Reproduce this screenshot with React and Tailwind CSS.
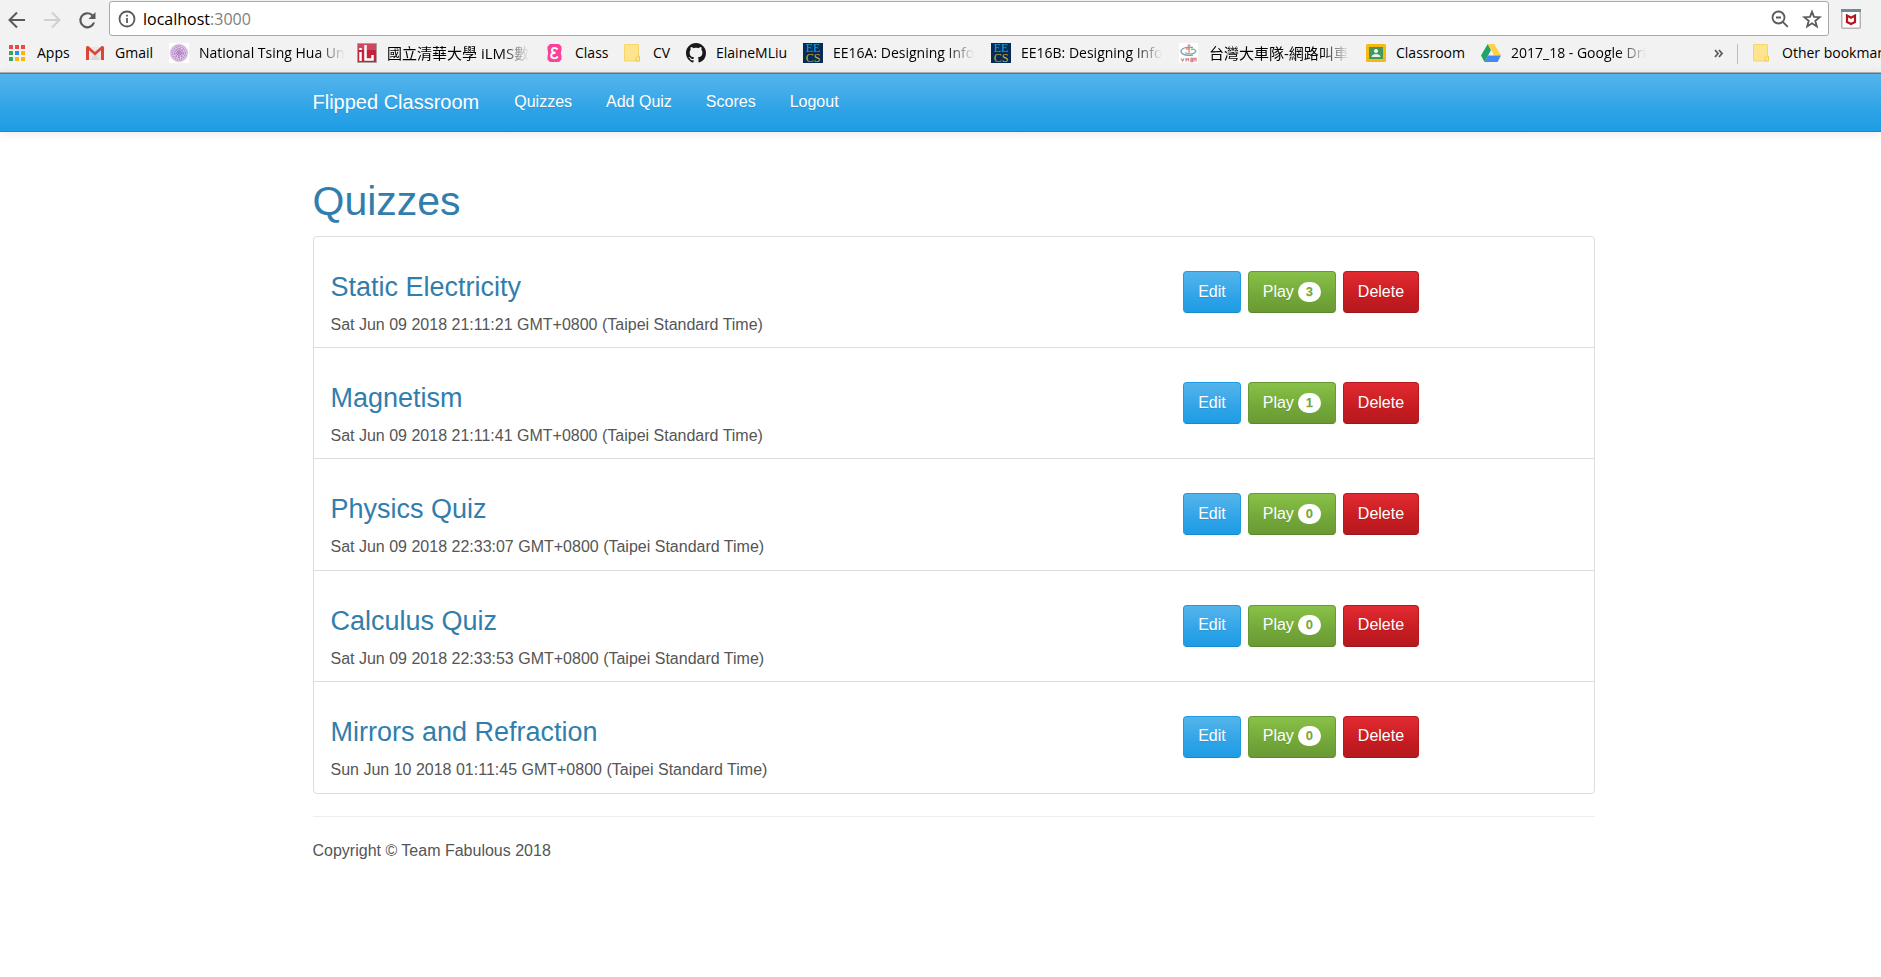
import React from "react";

const glyph = "block h-5 w-5 shrink-0";

function AppsIcon() {
  const colors = ["#f04a3e", "#f04a3e", "#f04a3e", "#3aa757", "#2a8cf0", "#fbb50f", "#3aa757", "#fbb50f", "#fbb50f"];
  return (
    <svg className={glyph} viewBox="0 0 20 20" aria-hidden="true">
      {colors.map((c, i) => (
        <rect key={i} x={2 + (i % 3) * 6} y={2 + Math.floor(i / 3) * 6} width="4" height="4" fill={c} />
      ))}
    </svg>
  );
}

function GmailIcon() {
  return (
    <svg className={glyph} viewBox="0 0 20 20" aria-hidden="true">
      <path d="M2 4h16v13H2z" fill="#e9e6e6" />
      <path d="M5 17l5-6 5 6z" fill="#d8d6d6" />
      <path d="M1 4.500q0-1.500 1.500-1.500h.8L10 9l6.700-6h.8Q19 3 19 4.500V17h-3V7.200L10 12.500 4 7.200V17H1z" fill="#dc4639" />
    </svg>
  );
}

function SealIcon() {
  return (
    <svg className={glyph} viewBox="0 0 20 20" aria-hidden="true">
      <path d="M0 0h20v20H0z" fill="#fff" />
      <circle cx="10" cy="10" r="9.300" fill="#e6d3ec" />
      <g fill="none" stroke="#b07fc4">
        <circle cx="10" cy="10" r="8" strokeWidth="1" opacity=".5" />
        <circle cx="10" cy="10" r="6.300" strokeWidth="1.200" strokeDasharray="1.500 .6" />
        <circle cx="10" cy="10" r="4.300" strokeWidth="1.200" strokeDasharray="2 .8" />
        <circle cx="10" cy="10" r="2.200" strokeWidth="1.200" />
      </g>
      <path d="M10 5v10M5 10h10M6.500 6.500l7 7M13.500 6.500l-7 7" stroke="#a674bd" strokeWidth=".6" />
    </svg>
  );
}

function IlmsIcon() {
  return (
    <svg className={glyph} viewBox="0 0 20 20" aria-hidden="true">
      <path d="M.5.500h19v19H.500z" fill="#c5203c" stroke="#a9a0a0" />
      <path d="M1 1h18v6H1z" fill="#d7607a" opacity=".6" />
      <path d="M3.500 5v2M3.500 9v9M8.500 2v14.500h7V12" fill="none" stroke="#fff" strokeWidth="2.500" />
    </svg>
  );
}

function EIcon() {
  return (
    <svg className={glyph} viewBox="0 0 20 20" aria-hidden="true">
      <path d="M5 1h9l2.500 2.500V7l-.7 3 .7 3v3.500L14 19H5l-2.500-2.500V13l.7-3-.7-3V3.500z" fill="#fb429b" />
      <path d="M12.500 6.500C11 4.300 7 4.700 7 7.300c0 1.700 1.500 2.500 3.500 2.500-2.500 0-4.300 1-4.300 3 0 3 5.200 3.200 6.500.7" fill="none" stroke="#fff" strokeWidth="2" />
    </svg>
  );
}

function FolderIcon() {
  return (
    <svg className={glyph} viewBox="0 0 20 20" aria-hidden="true">
      <path d="M1.500 1.500h14v12h1v4.500h-15z" fill="#fee48e" stroke="#f7d567" />
      <path d="M13 18v-3.500l2-1.500h1.500v5z" fill="#fee48e" stroke="#f2cb55" />
    </svg>
  );
}

function GithubIcon() {
  return (
    <svg className={glyph} viewBox="0 0 16 16" fill="#191717" aria-hidden="true">
      <path d="M8 0C3.580 0 0 3.580 0 8c0 3.540 2.290 6.530 5.470 7.590.4.070.55-.17.55-.38 0-.19-.01-.82-.01-1.490-2.010.37-2.530-.49-2.690-.94-.09-.23-.48-.94-.82-1.130-.28-.15-.68-.52-.01-.53.63-.01 1.080.58 1.230.82.72 1.210 1.870.87 2.330.66.070-.52.28-.87.51-1.070-1.780-.2-3.640-.89-3.640-3.950 0-.87.31-1.590.82-2.150-.08-.2-.36-1.020.08-2.120 0 0 .67-.21 2.200.82.64-.18 1.320-.27 2-.27s1.360.09 2 .27c1.530-1.040 2.200-.82 2.200-.82.44 1.100.16 1.920.08 2.120.51.56.82 1.270.82 2.150 0 3.070-1.870 3.750-3.650 3.950.29.25.54.73.54 1.480 0 1.070-.01 1.930-.01 2.200 0 .21.15.46.55.38A8.010 8.010 0 0 0 16 8c0-4.420-3.580-8-8-8z" />
    </svg>
  );
}

function EecsIcon() {
  return (
    <span className="flex h-5 w-5 shrink-0 flex-col items-center justify-center bg-[#062b55] font-['Liberation_Serif',serif] text-[12px] leading-[10px]" aria-hidden="true">
      <span className="text-[#18a5dc]">EE</span>
      <span className="text-[#d9a52e]">CS</span>
    </span>
  );
}

function TaxiIcon() {
  return (
    <svg className={glyph} viewBox="0 0 20 20" aria-hidden="true">
      <path d="M0 0h19v20H0z" fill="#fff" />
      <g fill="none" strokeWidth="1.300">
        <path d="M14 4.500C7 3.500 2 5.500 2 8.500S8 13 14 12" stroke="#7fa3b5" />
        <path d="M6 9.500c4 2.500 10 1.500 11-1.500-1-1.500-3-2-5-1.500" stroke="#7fbb9b" />
        <path d="M10 5v5.500M7 6h4" stroke="#eb8d72" />
        <path d="M2 15.500l1.500 2.500L5 15.500M7 18.500v-2.500h2.500v2.500M12 15.500h1.500v3H12zM15 18.500v-3h2v3" stroke="#d6848b" />
      </g>
      <circle cx="10" cy="2.500" r="1.300" fill="#eb8d72" />
    </svg>
  );
}

function ClassroomIcon() {
  return (
    <svg className={glyph} viewBox="0 0 20 20" aria-hidden="true">
      <rect y="1" width="20" height="18" rx="1.500" fill="#f5ba16" />
      <path d="M3 4h14v12H3z" fill="#43995a" />
      <circle cx="10" cy="8" r="2" fill="#fff" />
      <path d="M5.500 14c0-4 9-4 9 0z" fill="#e8f3ea" />
    </svg>
  );
}

function DriveIcon() {
  return (
    <svg className={glyph} viewBox="0 0 20 20" aria-hidden="true">
      <path d="M6.700 1L0 12.500 3.500 19l6.500-12z" fill="#1fa463" />
      <path d="M6.700 1h6.600L20 12.500h-6.700z" fill="#ffcf48" />
      <path d="M6.800 12.500H20L16.600 19H3.500z" fill="#4587f4" />
    </svg>
  );
}

function Bookmark({ icon, label, width = "", fade, cjk }) {
  return (
    <a href="#" className={"flex h-9 shrink-0 items-center gap-[10px] pb-[2px] " + width}>
      {icon}
      <span
        className={
          "whitespace-nowrap " +
          (cjk ? "text-[15px] " : "text-[14px] ") +
          (fade ? "[mask-image:linear-gradient(to_right,#000_calc(100%-28px),transparent)]" : "")
        }
      >
        {label}
      </span>
    </a>
  );
}

const bookmarks = [
  { icon: <AppsIcon />, label: "Apps", width: "w-[78px]" },
  { icon: <GmailIcon />, label: "Gmail", width: "w-[84px]" },
  { icon: <SealIcon />, label: "National Tsing Hua Un", width: "w-[188px]", fade: true },
  { icon: <IlmsIcon />, label: "國立清華大學 iLMS數", width: "w-[188px]", fade: true, cjk: true },
  { icon: <EIcon />, label: "Class", width: "w-[78px]" },
  { icon: <FolderIcon />, label: "CV", width: "w-[63px]" },
  { icon: <GithubIcon />, label: "ElaineMLiu", width: "w-[117px]" },
  { icon: <EecsIcon />, label: "EE16A: Designing Info", width: "w-[188px]", fade: true },
  { icon: <EecsIcon />, label: "EE16B: Designing Info", width: "w-[188px]", fade: true },
  { icon: <TaxiIcon />, label: "台灣大車隊-網路叫車", width: "w-[187px]", fade: true, cjk: true },
  { icon: <ClassroomIcon />, label: "Classroom", width: "w-[115px]" },
  { icon: <DriveIcon />, label: "2017_18 - Google Dri", width: "w-[188px]", fade: true },
];

function BrowserBar() {
  return (
    <header className="overflow-hidden border-b border-[#b3b3b3] bg-[#f2f2f2] font-['Open_Sans','Noto_Sans_CJK_TC',sans-serif] text-black">
      <div className="flex h-9 items-end">
        <div className="flex h-8 w-[109px] shrink-0 items-center gap-[15px] pl-[7px] text-[#5a5a5a]">
          <button type="button" aria-label="Back">
            <svg className={glyph} viewBox="0 0 20 20" fill="none" stroke="currentColor" strokeWidth="2">
              <path d="M18 10H3M10 2.500L2.500 10l7.500 7.500" />
            </svg>
          </button>
          <button type="button" aria-label="Forward" className="text-[#d0d0d0]">
            <svg className={glyph} viewBox="0 0 20 20" fill="none" stroke="currentColor" strokeWidth="2">
              <path d="M2 10h15M10 2.500l7.500 7.500-7.500 7.500" />
            </svg>
          </button>
          <button type="button" aria-label="Reload">
            <svg className={glyph} viewBox="0 0 20 20" fill="none" stroke="currentColor" strokeWidth="2.200">
              <path d="M17 12.500A7 7 0 1 1 15 5l1.500 1.500" />
              <path d="M18.500 2v7h-7z" fill="currentColor" stroke="none" />
            </svg>
          </button>
        </div>
        <div className="flex h-[35px] min-w-0 flex-1 items-center rounded-[3px] border border-[#a9a9a9] bg-white pr-[6px] pl-[7px]">
          <svg className={glyph} viewBox="0 0 20 20" fill="none" stroke="#5a5a5a" strokeWidth="1.800" aria-hidden="true">
            <circle cx="10" cy="10" r="7.500" />
            <path d="M10 9v5M10 5.800v1.800" />
          </svg>
          <p className="ml-[6px] flex-1 text-[16px] leading-6">
            localhost<span className="text-[#808080]">:3000</span>
          </p>
          <button type="button" aria-label="Zoom">
            <svg className={glyph} viewBox="0 0 20 20" fill="none" stroke="#5a5a5a" strokeWidth="1.800">
              <circle cx="8.500" cy="8.500" r="6" />
              <path d="M6 8.500h5M12.800 12.800l5 5" />
            </svg>
          </button>
          <button type="button" aria-label="Bookmark this page" className="ml-3">
            <svg className={glyph} viewBox="0 0 20 20" fill="none" stroke="#5a5a5a" strokeWidth="1.800">
              <path d="M10 2.700l2 5.200 5.800.3-4.500 3.600 1.500 5.600-4.800-3.100-4.800 3.100 1.500-5.600L2.200 8.200l5.800-.3z" />
            </svg>
          </button>
        </div>
        <div className="flex h-[35px] w-[52px] shrink-0 items-center pl-3">
          <button type="button" aria-label="Web security">
            <svg className={glyph} viewBox="0 0 20 20">
              <rect x=".75" y=".75" width="18.500" height="18.500" rx="1.500" fill="#fff" stroke="#b5b5b5" strokeWidth="1.500" />
              <path d="M0 0h20v3H0z" fill="#6f8b98" />
              <path d="M6 6.500l4 2.200 4-2.200v6.500l-4 2-4-2z" fill="none" stroke="#b7141e" strokeWidth="2.200" />
            </svg>
          </button>
        </div>
      </div>
      <nav aria-label="Bookmarks" className="flex h-9 items-center pl-[7px] leading-5">
        <div className="flex min-w-0 flex-1 overflow-hidden">
          {bookmarks.map((b) => (
            <Bookmark key={b.label} {...b} />
          ))}
        </div>
        <div className="flex w-[168px] shrink-0 items-center">
          <button type="button" aria-label="More bookmarks" className="w-6 shrink-0">
            <svg className="block h-3 w-3" viewBox="0 0 12 12" fill="none" stroke="#5a5a5a" strokeWidth="1.800">
              <path d="M2 2l3 3.500L2 9M6 2l3 3.500L6 9" />
            </svg>
          </button>
          <span className="mr-[14px] h-5 w-px shrink-0 bg-[#bdbdbd]" />
          <Bookmark icon={<FolderIcon />} label="Other bookmarks" />
        </div>
      </nav>
    </header>
  );
}

const navLinks = ["Quizzes", "Add Quiz", "Scores", "Logout"];

const quizzes = [
  { title: "Static Electricity", date: "Sat Jun 09 2018 21:11:21 GMT+0800 (Taipei Standard Time)", plays: 3 },
  { title: "Magnetism", date: "Sat Jun 09 2018 21:11:41 GMT+0800 (Taipei Standard Time)", plays: 1 },
  { title: "Physics Quiz", date: "Sat Jun 09 2018 22:33:07 GMT+0800 (Taipei Standard Time)", plays: 0 },
  { title: "Calculus Quiz", date: "Sat Jun 09 2018 22:33:53 GMT+0800 (Taipei Standard Time)", plays: 0 },
  { title: "Mirrors and Refraction", date: "Sun Jun 10 2018 01:11:45 GMT+0800 (Taipei Standard Time)", plays: 0 },
];

const button =
  "flex h-[42px] items-center rounded-[4px] border px-[14px] pb-px text-white [text-shadow:0_1px_0_rgba(0,0,0,0.1)]";

function QuizRow({ title, date, plays }) {
  return (
    <li className="grid grid-cols-3 border-b border-[#dddddd] px-[17px] last:border-b-0">
      <div className="col-span-2 pt-[35px]">
        <h3 className="text-[27px] leading-[30px] text-[#317eac]">
          <a href="#">{title}</a>
        </h3>
        <p className="mt-3 leading-[22px]">{date}</p>
      </div>
      <div className="flex items-start gap-[7px] pt-[34px] pl-[22px]">
        <button type="button" className={button + " border-[#1d9ce5] border-b-[#178acc] bg-linear-to-b from-[#54b4eb] via-[#2fa4e7] via-60% to-[#1d9ce5]"}>
          Edit
        </button>
        <button type="button" className={button + " gap-[4px] border-[#699934] border-b-[#5c862e] bg-linear-to-b from-[#88c149] via-[#73a839] via-60% to-[#699934]"}>
          Play
          <span className="flex h-5 min-w-[23px] items-center justify-center rounded-full bg-white text-[13px] leading-4 font-bold text-[#73a839]">
            {plays}
          </span>
        </button>
        <button type="button" className={button + " border-[#b5191f] border-b-[#9a161a] bg-linear-to-b from-[#e12b31] via-[#c71c22] via-60% to-[#b5191f]"}>
          Delete
        </button>
      </div>
    </li>
  );
}

export default function App() {
  return (
    <div className="min-h-screen bg-white font-['Liberation_Sans',Arial,sans-serif] text-[16px] text-[#555555]">
      <BrowserBar />
      <div className="border-y border-[#178acc] bg-linear-to-b from-[#54b4eb] via-[#2fa4e7] via-60% to-[#1d9ce5] pl-[26px] shadow-[0_1px_10px_rgba(0,0,0,0.1)]">
        <nav aria-label="Main" className="mx-auto flex h-[57px] max-w-[1282px] items-center pb-[2px] text-white [text-shadow:0_1px_0_rgba(0,0,0,0.1)]">
          <a href="#" className="mr-[18px] text-[20px]">
            Flipped Classroom
          </a>
          {navLinks.map((label) => (
            <a key={label} href="#" className="px-[17px]">
              {label}
            </a>
          ))}
        </nav>
      </div>
      <div className="pl-[26px]">
        <main className="mx-auto max-w-[1282px] pt-[46px]">
          <h1 className="text-[41px] leading-[46px] text-[#317eac]">Quizzes</h1>
          <ul className="mt-[12px] grid min-h-[558px] auto-rows-fr rounded-[4px] border border-[#dddddd]">
            {quizzes.map((quiz) => (
              <QuizRow key={quiz.title} {...quiz} />
            ))}
          </ul>
          <footer className="mt-[22px] border-t border-[#eeeeee] pt-[23px]">
            <p className="leading-[22px]">Copyright © Team Fabulous 2018</p>
          </footer>
        </main>
      </div>
    </div>
  );
}
